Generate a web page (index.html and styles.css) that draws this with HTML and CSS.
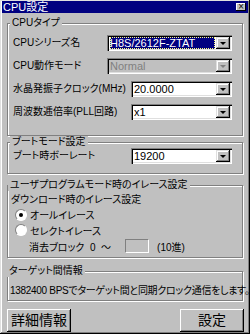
FILE: index.html
```html
<!DOCTYPE html>
<html>
<head>
<meta charset="utf-8">
<link rel="stylesheet" href="styles.css">
</head>
<body>
<div class="window">
  <div class="titlebar">
    <span class="title">CPU設定</span>
    <span class="close">×</span>
  </div>

  <fieldset class="group cpu">
    <legend>CPUタイプ</legend>
    <div class="row">
      <span class="lbl">CPUシリーズ名</span>
      <div class="combo long">
        <div class="val"><span class="hl">H8S/2612F-ZTAT</span></div>
        <div class="btn"><span class="arrow"></span></div>
      </div>
    </div>
    <div class="row">
      <span class="lbl">CPU動作モード</span>
      <div class="combo long off">
        <div class="val">Normal</div>
        <div class="btn"><span class="arrow"></span></div>
      </div>
    </div>
    <div class="row">
      <span class="lbl">水晶発振子クロック(MHz)</span>
      <div class="combo">
        <div class="val">20.0000</div>
        <div class="btn"><span class="arrow"></span></div>
      </div>
    </div>
    <div class="row">
      <span class="lbl">周波数逓倍率(PLL回路)</span>
      <div class="combo">
        <div class="val">x1</div>
        <div class="btn"><span class="arrow"></span></div>
      </div>
    </div>
  </fieldset>

  <fieldset class="group boot">
    <legend>ブートモード設定</legend>
    <div class="row short">
      <span class="lbl">ブート時ボーレート</span>
      <div class="combo">
        <div class="val">19200</div>
        <div class="btn"><span class="arrow"></span></div>
      </div>
    </div>
  </fieldset>

  <fieldset class="group erase">
    <legend>ユーザプログラムモード時のイレース設定</legend>
    <div class="sub">ダウンロード時のイレース設定</div>
    <div class="radio first"><span class="dot on"></span>オールイレース</div>
    <div class="radio"><span class="dot"></span>セレクトイレース</div>
    <div class="block">
      <span>消去ブロック&nbsp;&nbsp;0&nbsp;&nbsp;～</span>
      <span class="box"></span>
      <span>(10進)</span>
    </div>
  </fieldset>

  <fieldset class="group target">
    <legend>ターゲット間情報</legend>
    <div class="info">1382400 BPSでターゲット間と同期クロック通信をします。</div>
  </fieldset>

  <div class="buttons">
    <div class="pbtn">詳細情報</div>
    <div class="pbtn">設定</div>
  </div>
</div>
</body>
</html>
```

FILE: styles.css
```css
body {
  margin: 0;
  font-family: "Liberation Sans", "Noto Sans CJK JP", sans-serif;
  font-size: 10px;
  font-feature-settings: "palt";
  color: #000;
  background: #c0c0c0;
}

.window {
  width: 250px;
  height: 334px;
  box-sizing: border-box;
  padding: 1px 2px 2px 2px;
  background: #c0c0c0;
  display: flex;
  flex-direction: column;
  overflow: hidden;
  box-shadow: inset -1px -1px 0 #000, inset 1px 1px 0 #dfdfdf,
              inset -2px -2px 0 #808080, inset 2px 2px 0 #fff;
}

.titlebar {
  flex: none;
  height: 12px;
  background: #000080;
  color: #fff;
  display: flex;
  align-items: center;
  justify-content: space-between;
  padding: 0 2px 0 1px;
}

.title {
  font-size: 11px;
  line-height: 12px;
}

.close {
  width: 10px;
  height: 8px;
  background: #c0c0c0;
  color: #000;
  font-family: "DejaVu Sans", sans-serif;
  font-size: 8px;
  line-height: 8px;
  text-align: center;
  box-shadow: inset -1px -1px 0 #000, inset 1px 1px 0 #fff;
}

.group {
  flex: none;
  box-sizing: border-box;
  margin: 0 5px 0 5px;
  padding: 0 0 0 5px;
  border: 1px solid #808080;
  box-shadow: inset 1px 1px 0 #fff, 1px 1px 0 #fff;
  min-width: 0;
  white-space: nowrap;
}

.group legend {
  padding: 0 2px;
  margin-left: -3px;
  line-height: 12px;
  background: #c0c0c0;
}

.cpu {
  margin-top: 4px;
  height: 119px;
  padding-top: 2px;
}

.row {
  display: flex;
  justify-content: space-between;
  align-items: center;
  height: 23px;
  padding-right: 10px;
}

.row.short {
  height: 16px;
}

.lbl {
  line-height: 14px;
}

.combo {
  flex: none;
  width: 101px;
  height: 16px;
  box-sizing: border-box;
  background: #fff;
  display: flex;
  padding: 2px;
  box-shadow: inset 1px 1px 0 #808080, inset 2px 2px 0 #000,
              inset -1px -1px 0 #fff, inset -2px -2px 0 #dfdfdf;
}

.combo.long {
  width: 125px;
}

.combo.off {
  background: #c0c0c0;
  color: #808080;
}

.val {
  flex: 1;
  font-size: 11px;
  line-height: 12px;
  padding-left: 1px;
}

.hl {
  display: block;
  background: #000080;
  color: #fff;
  outline: 1px dotted #ffff80;
  outline-offset: -1px;
  margin-right: 1px;
}

.btn {
  width: 14px;
  height: 12px;
  box-sizing: border-box;
  background: #c0c0c0;
  display: flex;
  align-items: center;
  justify-content: center;
  box-shadow: inset -1px -1px 0 #000, inset 1px 1px 0 #dfdfdf,
              inset -2px -2px 0 #808080, inset 2px 2px 0 #fff;
}

.arrow {
  width: 0;
  height: 0;
  border-left: 3px solid transparent;
  border-right: 3px solid transparent;
  border-top: 3px solid #000;
  margin-top: 1px;
}

.off .arrow {
  border-top-color: #808080;
}

.boot {
  height: 38px;
}

.erase {
  margin-top: 5px;
  height: 79px;
  padding: 2px 0 0 3px;
}

.sub {
  line-height: 14px;
  height: 14px;
}

.radio {
  display: flex;
  align-items: center;
  height: 16px;
  padding-left: 4px;
}

.radio.first {
  height: 15px;
}

.dot {
  width: 12px;
  height: 12px;
  box-sizing: border-box;
  border-radius: 50%;
  background: #fff;
  margin-right: 3px;
  border: 1px solid;
  border-color: #808080 #fff #fff #808080;
  display: flex;
  align-items: center;
  justify-content: center;
}

.dot.on::after {
  content: "";
  width: 4px;
  height: 4px;
  border-radius: 50%;
  background: #000;
}

.block {
  display: flex;
  align-items: center;
  height: 16px;
  padding-left: 18px;
  gap: 8px;
}

.box {
  width: 24px;
  height: 14px;
  box-sizing: border-box;
  border: 1px solid;
  border-color: #808080 #fff #fff #808080;
  margin-left: 6px;
}

.target {
  margin-top: 7px;
  height: 36px;
  padding: 7px 0 0 2px;
}

.info {
  line-height: 14px;
  letter-spacing: -0.3px;
}

.buttons {
  flex: none;
  display: flex;
  justify-content: space-between;
  margin: 8px 4px 0 5px;
}

.pbtn {
  width: 64px;
  height: 23px;
  box-sizing: border-box;
  font-size: 14px;
  line-height: 23px;
  text-align: center;
  background: #c0c0c0;
  box-shadow: inset -1px -1px 0 #000, inset 1px 1px 0 #fff,
              inset -2px -2px 0 #808080;
}
```
